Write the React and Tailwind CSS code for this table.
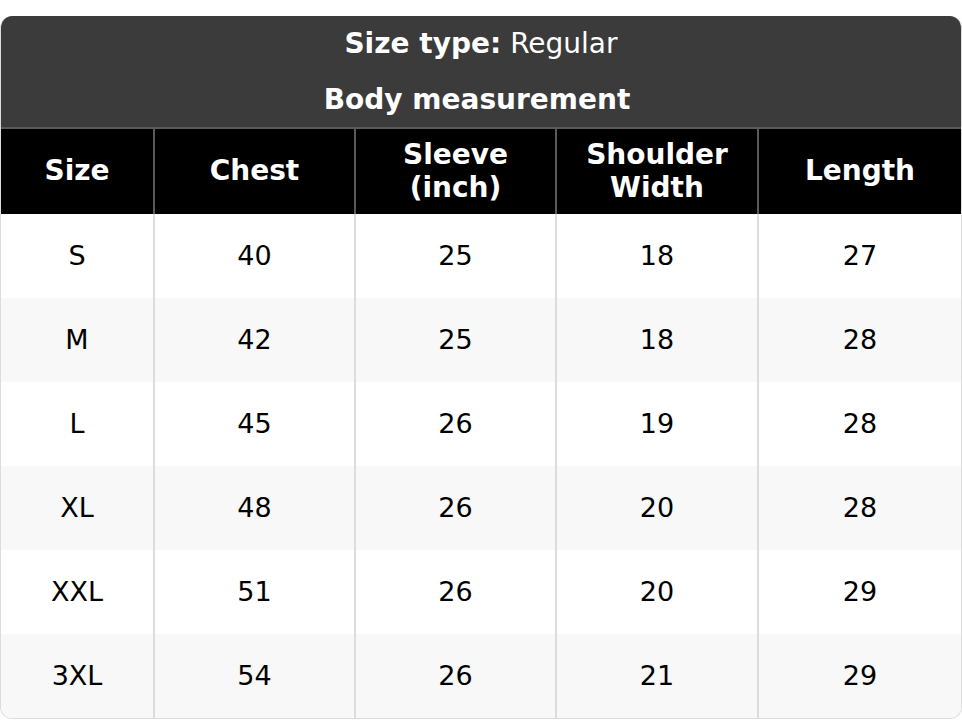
const headers = ["Size", "Chest", "Sleeve\n(inch)", "Shoulder\nWidth", "Length"];

const rows = [
  ["S", "40", "25", "18", "27"],
  ["M", "42", "25", "18", "28"],
  ["L", "45", "26", "19", "28"],
  ["XL", "48", "26", "20", "28"],
  ["XXL", "51", "26", "20", "29"],
  ["3XL", "54", "26", "21", "29"],
];

const cols = "grid grid-cols-[154px_201px_201px_202px_1fr]";

export default function App() {
  return (
    <div
      className="w-[962px] pt-4 bg-white"
      style={{ fontFamily: '"DejaVu Sans", sans-serif' }}
    >
      <div className="overflow-hidden rounded-xl border-[1.5px] border-[#dcdcdc] border-t-0">
        {/* title */}
        <div className="bg-[#3b3b3b] text-white text-[28px] leading-[1.2]">
          <div className="h-[56px] flex items-center justify-center">
            <span className="font-bold">Size type:</span>
            <span className="ml-[9px]">Regular</span>
          </div>
          <div className="h-[55px] flex items-center justify-center font-bold pr-2">
            Body measurement
          </div>
        </div>

        {/* header row */}
        <div className={`${cols} bg-black border-t-2 border-[#5a5a5a]`}>
          {headers.map((h, i) => (
            <div
              key={i}
              className={`h-[85px] flex items-center justify-center text-center text-white font-bold text-[28px] leading-[1.15] whitespace-pre-line border-[#5a5a5a] ${
                i < headers.length - 1 ? "border-r-2" : ""
              }`}
            >
              {h}
            </div>
          ))}
        </div>

        {/* body rows */}
        {rows.map((r, ri) => (
          <div
            key={ri}
            className={`${cols} ${ri % 2 === 1 ? "bg-[#f8f8f8]" : "bg-white"}`}
          >
            {r.map((c, ci) => (
              <div
                key={ci}
                className={`h-[84px] flex items-center justify-center text-[27px] text-black border-[#dcdcdc] ${
                  ci < r.length - 1 ? "border-r-2" : ""
                }`}
              >
                {c}
              </div>
            ))}
          </div>
        ))}
      </div>
    </div>
  );
}
